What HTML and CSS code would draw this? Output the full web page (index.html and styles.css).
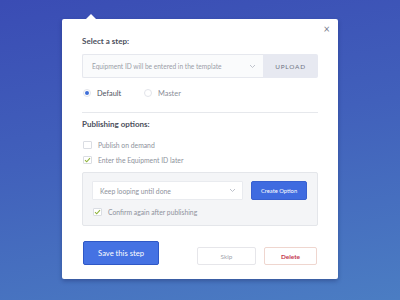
FILE: index.html
```html
<!DOCTYPE html>
<html>
<head>
<meta charset="utf-8">
<link rel="stylesheet" href="styles.css">
</head>
<body>
<div class="card">
  <span class="caret"></span>
  <span class="close">&times;</span>
  <div class="label">Select a step:</div>
  <div class="input-group">
    <div class="input">
      <span class="placeholder">Equipment ID will be entered in the template</span>
      <svg class="chev" width="7" height="5" viewBox="0 0 7 5"><path d="M1 1l2.5 2.5L6 1" fill="none" stroke="#b8bcc6" stroke-width="0.9"/></svg>
    </div>
    <div class="upload">UPLOAD</div>
  </div>
  <div class="radios">
    <div class="radio on"><span class="dot"></span><span>Default</span></div>
    <div class="radio"><span class="dot"></span><span>Master</span></div>
  </div>
  <div class="divider"></div>
  <div class="label sub">Publishing options:</div>
  <div class="check first"><span class="box"></span><span>Publish on demand</span></div>
  <div class="check"><span class="box"><svg width="7" height="6" viewBox="0 0 7 6"><path d="M1 3.2l1.7 1.6L6 1.2" fill="none" stroke="#8fb33a" stroke-width="1.1"/></svg></span><span>Enter the Equipment ID later</span></div>
  <div class="panel">
    <div class="panel-row">
      <div class="select">
        <span>Keep looping until done</span>
        <svg class="chev" width="7" height="5" viewBox="0 0 7 5"><path d="M1 1l2.5 2.5L6 1" fill="none" stroke="#b8bcc6" stroke-width="0.9"/></svg>
      </div>
      <div class="btn-create">Create Option</div>
    </div>
    <div class="check confirm"><span class="box"><svg width="7" height="6" viewBox="0 0 7 6"><path d="M1 3.2l1.7 1.6L6 1.2" fill="none" stroke="#8fb33a" stroke-width="1.1"/></svg></span><span>Confirm again after publishing</span></div>
  </div>
  <div class="actions">
    <div class="btn-save">Save this step</div>
    <div class="spacer"></div>
    <div class="btn-skip">Skip</div>
    <div class="btn-delete">Delete</div>
  </div>
</div>
</body>
</html>
```

FILE: styles.css
```css
html, body {
  margin: 0;
  padding: 0;
}
body {
  width: 400px;
  height: 300px;
  overflow: hidden;
  background: linear-gradient(170deg, #3a4cb4 0%, #4160bb 45%, #4b7dc3 100%);
  font-family: Lato, "Open Sans", sans-serif;
  padding-top: 19px;
  box-sizing: border-box;
}
.card {
  position: relative;
  margin-left: 62px;
  width: 276px;
  height: 260px;
  box-sizing: border-box;
  background: #fff;
  border-radius: 2px;
  padding: 17px 20px 0;
  box-shadow: 0 2px 4px rgba(20, 30, 80, 0.35);
}
.caret {
  position: absolute;
  top: -5px;
  left: 24px;
  width: 0;
  height: 0;
  border-left: 5px solid transparent;
  border-right: 5px solid transparent;
  border-bottom: 5px solid #fff;
}
.close {
  position: absolute;
  top: 4px;
  right: 8px;
  font-size: 11px;
  line-height: 12px;
  color: #7b8090;
}
.label {
  font-size: 8px;
  line-height: 10px;
  font-weight: 700;
  color: #4c4f5c;
}
.input-group {
  margin-top: 8px;
  display: flex;
  height: 24px;
}
.input {
  flex: 1;
  display: flex;
  align-items: center;
  background: #fafbfc;
  border: 1px solid #e6e8ee;
  border-right: none;
  border-radius: 2px 0 0 2px;
  padding: 0 7px 0 9px;
}
.placeholder {
  flex: 1;
  font-size: 6.6px;
  color: #9a9ea8;
}
.upload {
  width: 55px;
  display: flex;
  align-items: center;
  justify-content: center;
  background: #e7e9f1;
  border-radius: 0 2px 2px 0;
  font-size: 6.4px;
  letter-spacing: 0.8px;
  color: #6e7384;
}
.radios {
  margin-top: 10px;
  display: flex;
  height: 10px;
  align-items: center;
  padding-left: 1px;
}
.radio {
  display: flex;
  align-items: center;
  width: 61px;
  font-size: 7.4px;
  color: #8a8e98;
}
.radio.on {
  color: #4d5160;
}
.radio .dot {
  box-sizing: border-box;
  width: 8px;
  height: 8px;
  border-radius: 50%;
  border: 1px solid #e2e4ea;
  margin-right: 6px;
  display: flex;
  align-items: center;
  justify-content: center;
}
.radio.on .dot::after {
  content: "";
  width: 4px;
  height: 4px;
  border-radius: 50%;
  background: #3f6fd8;
}
.divider {
  margin-top: 14px;
  height: 1px;
  background: #e6e8ec;
}
.label.sub {
  margin-top: 6px;
}
.check {
  display: flex;
  align-items: center;
  height: 10px;
  margin-top: 5px;
  font-size: 6.8px;
  color: #8e929c;
  padding-left: 1px;
}
.check.first {
  margin-top: 11px;
}
.check .box {
  box-sizing: border-box;
  width: 9px;
  height: 8px;
  border: 1px solid #dadde3;
  border-radius: 1px;
  margin-right: 6px;
  display: flex;
  align-items: center;
  justify-content: center;
  background: #fff;
}
.panel {
  margin-top: 7px;
  background: #f4f5f7;
  border: 1px solid #e4e6ea;
  border-radius: 2px;
  padding: 8px 10px 8px 9px;
}
.panel-row {
  display: flex;
  gap: 8px;
  height: 19px;
}
.select {
  flex: 1;
  display: flex;
  align-items: center;
  background: #fff;
  border: 1px solid #e9ebef;
  border-radius: 1px;
  padding: 0 6px 0 7px;
  font-size: 6.8px;
  color: #8e929c;
}
.select span {
  flex: 1;
}
.btn-create {
  width: 56px;
  display: flex;
  align-items: center;
  justify-content: center;
  background: #3f6be0;
  border: 1px solid #3860cf;
  box-sizing: border-box;
  border-radius: 2px;
  color: #fff;
  font-size: 5.8px;
}
.check.confirm {
  margin-top: 7px;
}
.actions {
  margin-top: 15px;
  display: flex;
  align-items: flex-end;
  margin-right: 1px;
  padding-left: 1px;
}
.btn-save {
  width: 76px;
  height: 24px;
  box-sizing: border-box;
  background: #4572e3;
  border: 1px solid #2f58c6;
  border-radius: 2px;
  color: #fff;
  font-size: 7.6px;
  display: flex;
  align-items: center;
  justify-content: center;
}
.spacer {
  flex: 1;
}
.btn-skip, .btn-delete {
  height: 18px;
  box-sizing: border-box;
  border-radius: 2px;
  display: flex;
  align-items: center;
  justify-content: center;
  font-size: 6.4px;
  background: #fff;
}
.btn-skip {
  width: 59px;
  border: 1px solid #e6e6ea;
  color: #a2a6ae;
  margin-right: 8px;
}
.btn-delete {
  width: 53px;
  border: 1px solid #efd6cf;
  color: #c4354e;
  font-weight: 700;
}
```
